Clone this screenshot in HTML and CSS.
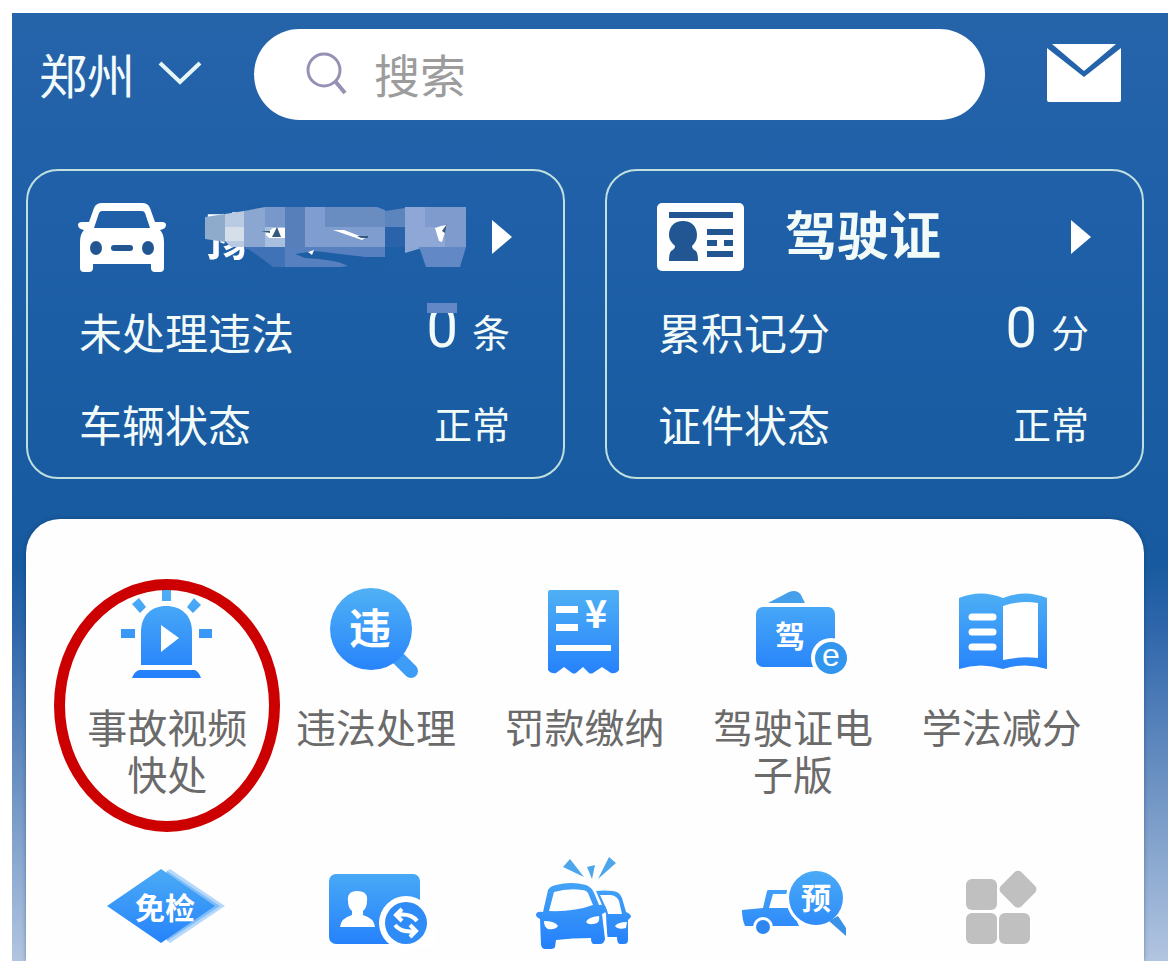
FILE: index.html
```html
<!DOCTYPE html>
<html lang="zh-CN">
<head>
    <meta charset="UTF-8">
    <meta name="viewport" content="width=device-width, initial-scale=1.0">
    <title>交管12123 - 郑州</title>
    <link rel="stylesheet" href="styles.css">
</head>
<body>
    <div class="app">
        <!-- 顶部栏 -->
        <header class="topbar">
            <button class="city" type="button">
                郑州
                <svg width="42" height="24" viewBox="0 0 42 24" fill="none" stroke="#e6f5f5" stroke-width="4">
                    <path d="M1 2 L21 21 L41 2"/>
                </svg>
            </button>
            <label class="search">
                <svg width="42" height="44" viewBox="0 0 42 44" fill="none" stroke="#9590b4" stroke-width="3">
                    <circle cx="18" cy="19" r="16"/>
                    <path d="M29 30 L39 42" stroke-width="4"/>
                </svg>
                <input type="text" placeholder="搜索" aria-label="搜索">
            </label>
            <button class="mail" type="button" aria-label="消息">
                <svg width="74" height="58" viewBox="0 0 74 58" fill="#fff">
                    <path d="M5 0 H69 L37 27 Z"/>
                    <path d="M0 4 L37 33 L74 4 V56 Q74 58 72 58 H2 Q0 58 0 56 Z"/>
                </svg>
            </button>
        </header>

        <!-- 车辆与驾驶证 -->
        <div class="cards">
            <section class="card">
                <a class="card-title" href="#">
                    <svg width="88" height="70" viewBox="0 0 88 70">
                        <path fill="#fff" fill-rule="evenodd" d="M24 1 H64 Q70 1 72 6 L77 20 H84 Q88 20 88 23 Q88 27 82 28 Q86 32 86 40 V66 Q86 70 82 70 H77 Q73 70 73 66 V62 H15 V66 Q15 70 11 70 H6 Q2 70 2 66 V40 Q2 32 6 28 Q0 27 0 23 Q0 20 4 20 H11 L16 6 Q18 1 24 1 Z M24 9 Q22 9 21 11 L16 26 H72 L67 11 Q66 9 64 9 Z"/>
                        <g fill="#215692">
                            <ellipse cx="18" cy="46" rx="6" ry="7"/>
                            <ellipse cx="70" cy="46" rx="6" ry="7"/>
                            <rect x="33" y="43" width="22" height="6" rx="3"/>
                        </g>
                    </svg>
                    <!-- 车牌打码 -->
                    <svg class="plate" width="261" height="64" viewBox="0 0 261 64">
                        <text x="1" y="50" class="plate-text">豫</text>
                        <path fill="#1d5ea5" d="M42 0 H60 V60 H42 Z"/>
                        <path fill="#8eabcb" d="M0 12 L20 9 V37 L0 34 Z"/>
                        <path fill="#b9cbe2" d="M20 9 L39 6 V42 H26 L20 36 Z"/>
                        <path fill="#d5dfe9" d="M20 22 H39 V36 H20 Z"/>
                        <path fill="#8ba7d1" d="M39 6 L60 2 V42 H39 Z"/>
                        <path fill="#7898cb" d="M60 2 H80 V42 H60 Z"/>
                        <path fill="#a9bfdf" d="M60 22 H80 V42 H60 Z"/>
                        <path fill="#5780bb" d="M80 2 H100 V42 H80 Z"/>
                        <path fill="#809dd1" d="M100 2 H120 V42 H100 Z"/>
                        <path fill="#6a8dc1" d="M120 2 H172 L180 5 V22 H120 Z"/>
                        <path fill="#7f9ecf" d="M120 22 H180 V42 H120 Z"/>
                        <path fill="#5c84bd" d="M180 6 L200 3 V22 H180 Z"/>
                        <path fill="#2a63aa" d="M180 22 H200 V42 H180 Z"/>
                        <path fill="#8ea7d7" d="M200 2 H220 V42 L200 48 Z"/>
                        <path fill="#7f9acd" d="M220 2 H261 V42 H220 Z"/>
                        <path fill="#8fa7d4" d="M220 22 H240 V42 H220 Z"/>
                        <path fill="#6288c6" d="M214 42 H261 L255 62 H221 Z"/>
                        <path fill="#3f72b6" d="M40 42 H80 V62 H68 L60 56 L52 50 Z"/>
                        <path fill="#5680c0" d="M80 42 H180 V52 L160 52 L118 50 L143 61 L135 62 H80 Z"/>
                        <path fill="#1d5ea5" d="M90 49 L110 46 L160 52 L180 53 V62 H150 Q128 54 100 53 Z"/>
                        <path fill="#fff" d="M60 29 L68 23 H80 V33 H64 Z M128 25 H139 L160 33 L157 35 Z M230 23 L236 21 L242 20 L237 37 L234 36 Z M103 47 L109 45 L107 50 Z"/>
                        <path fill="#345b7c" d="M56 26 L65 26 V28 Z M67 32 L72 22 L76 32 Z M152 31 H163 V33 H156 Z M237 26 L242 19 L240 28 Z"/>
                    </svg>
                    <svg class="arrow" width="20" height="34" viewBox="0 0 20 34" fill="#fff">
                        <path d="M0 0 L20 17 L0 34 Z"/>
                    </svg>
                </a>
                <dl>
                    <div class="row">
                        <dt>未处理违法</dt>
                        <dd><span class="num masked">0</span>条</dd>
                    </div>
                    <div class="row">
                        <dt>车辆状态</dt>
                        <dd>正常</dd>
                    </div>
                </dl>
            </section>

            <section class="card">
                <a class="card-title" href="#">
                    <svg width="88" height="70" viewBox="0 0 88 70">
                        <rect y="1" width="87" height="68" rx="5" fill="#fff"/>
                        <g fill="#215692">
                            <path d="M12 10 H76 V16 H12 Z M50 27 H76 V33 H50 Z M50 38 H60 V44 H50 Z M67 38 H76 V44 H67 Z M50 49 H76 V55 H50 Z"/>
                            <path d="M26 19 C35 19 40 25 40 33 C40 38 38 41 35 44 Q35 47 39 49 Q41 51 41 59 H12 Q12 51 14 49 Q18 47 18 44 C15 41 12 38 12 33 C12 25 17 19 26 19 Z"/>
                        </g>
                    </svg>
                    <h2>驾驶证</h2>
                    <svg class="arrow" width="20" height="34" viewBox="0 0 20 34" fill="#fff">
                        <path d="M0 0 L20 17 L0 34 Z"/>
                    </svg>
                </a>
                <dl>
                    <div class="row">
                        <dt>累积记分</dt>
                        <dd><span class="num">0</span>分</dd>
                    </div>
                    <div class="row">
                        <dt>证件状态</dt>
                        <dd>正常</dd>
                    </div>
                </dl>
            </section>
        </div>

        <!-- 业务入口 -->
        <nav class="panel">
            <a class="item marked" href="#">
                <svg width="120" height="100" viewBox="0 0 120 100">
                    <defs>
                        <linearGradient id="blue" gradientUnits="userSpaceOnUse" x1="0" y1="5" x2="0" y2="92">
                            <stop offset="0" stop-color="#4fb0f5"/>
                            <stop offset="1" stop-color="#2480fb"/>
                        </linearGradient>
                    </defs>
                    <g fill="url(#blue)">
                        <path d="M34 80 V47 C34 30 45 21 59 21 C74 21 85 30 85 47 V80 Z"/>
                        <path d="M25 93 Q27 87 32 85 H88 Q92 87 94 93 Z"/>
                        <path d="M55 2 H64 V16 H55 Z M14 44 H28 V53 H14 Z M92 44 H105 V53 H92 Z M32 13 L39 22 L33 28 L25 19 Z M87 13 L94 20 L86 28 L80 22 Z"/>
                    </g>
                    <path fill="#fff" d="M54 40 L72 53 L54 67 Z"/>
                </svg>
                <span>事故视频快处</span>
            </a>
            <a class="item" href="#">
                <svg width="120" height="100" viewBox="0 0 120 100">
                    <path d="M82 73 L95 86" stroke="#3c9cf6" stroke-width="14" stroke-linecap="round"/>
                    <circle cx="55" cy="44" r="41" fill="url(#blue)"/>
                    <text x="54" y="59" font-size="42">违</text>
                </svg>
                <span>违法处理</span>
            </a>
            <a class="item" href="#">
                <svg width="120" height="100" viewBox="0 0 120 100">
                    <path fill="url(#blue)" d="M26 5 H93 Q95 5 95 7 V85 Q92 89 87 88 L78 82 L69 88 Q67 89 65 88 L59 82 L52 88 Q50 89 48 88 L40 82 L32 88 Q27 89 24 85 V7 Q24 5 26 5 Z"/>
                    <path fill="#fff" d="M32 21 H54 V28 H32 Z M32 39 H54 V46 H32 Z M32 60 H87 V66 H32 Z"/>
                    <text x="72" y="43" font-size="38">¥</text>
                </svg>
                <span>罚款缴纳</span>
            </a>
            <a class="item" href="#">
                <svg width="120" height="100" viewBox="0 0 120 100">
                    <path fill="#459fea" d="M35 18 L56 7 Q64 4 68 10 L72 18 Z"/>
                    <rect x="23" y="22" width="79" height="60" rx="7" fill="url(#blue)"/>
                    <text x="57" y="62" font-size="30">驾</text>
                    <circle cx="98" cy="73" r="20" fill="#fff"/>
                    <circle cx="98" cy="73" r="16" fill="#3296ef"/>
                    <text x="98" y="81" font-size="32" class="latin">e</text>
                </svg>
                <span>驾驶证电子版</span>
            </a>
            <a class="item" href="#">
                <svg width="120" height="100" viewBox="0 0 120 100">
                    <path fill="url(#blue)" d="M17 13 Q39 4 61 13 Q83 4 105 13 V84 Q83 77 61 84 Q39 77 17 84 Z"/>
                    <path fill="#fff" d="M61 21 Q78 15 96 18 V73 Q78 71 61 75 Z"/>
                    <path d="M30 32 H51 M30 47 H51 M30 62 H51" stroke="#fff" stroke-width="7" stroke-linecap="round"/>
                </svg>
                <span>学法减分</span>
            </a>

            <a class="item" href="#" aria-label="免检">
                <svg width="120" height="100" viewBox="0 0 120 100">
                    <path fill="#b5d8fb" d="M63 14 L118 51 L63 88 L54 80 V20 Z"/>
                    <path fill="#7fbdf8" d="M60 16 L113 51 L60 86 Z"/>
                    <path fill="url(#blue)" d="M54 14 L108 51 L54 88 L0 51 Z"/>
                    <text x="58" y="64" font-size="30">免检</text>
                </svg>
            </a>
            <a class="item" href="#" aria-label="证件换领">
                <svg width="120" height="100" viewBox="0 0 120 100">
                    <rect x="13" y="19" width="91" height="70" rx="7" fill="url(#blue)"/>
                    <path fill="#fff" d="M41 36 C49 36 52 40 51 46 Q51 53 47 56 V60 Q58 63 59 72 H24 Q25 63 36 60 V56 Q32 53 32 46 C31 40 34 36 41 36 Z"/>
                    <circle cx="90" cy="68" r="27" fill="#fff"/>
                    <path fill="#fff" d="M90 68 H118 V92 H76 Z"/>
                    <circle cx="90" cy="68" r="21" fill="#2f8bf5"/>
                    <path d="M86 54 L80 60 L86 66 M81 60 Q95 58 101 66 M94 70 L100 76 L94 82 M99 76 Q85 78 79 70" fill="none" stroke="#fff" stroke-width="4"/>
                </svg>
            </a>
            <a class="item" href="#" aria-label="事故处理">
                <svg width="120" height="100" viewBox="0 0 120 100">
                    <g fill="url(#blue)">
                        <path fill-rule="evenodd" d="M72 36 Q80 35 89 36 Q96 37 98 43 L102 57 Q107 59 107 62 L104 65 V85 Q104 89 100 89 H96 Q93 89 93 82 H83 L82 59 L78 50 Z M76 40 L83 55 L84 59 H98 L95 46 Q93 41 87 40 Z"/>
                        <path fill-rule="evenodd" d="M24 35 Q26 31 32 30 Q47 26 62 30 Q68 32 71 40 L75 50 Q82 49 82 54 Q82 58 78 59 L81 84 Q80 89 76 89 H70 Q67 89 67 83 Q48 83 32 85 L31 92 Q30 94 26 94 H21 Q18 94 17 90 L16 64 Q12 62 12 60 Q12 56 19 57 Z M30 37 L25 56 Q50 57 69 50 L64 38 Q62 35 58 35 Q44 33 30 37 Z"/>
                    </g>
                    <path fill="#fff" d="M20 66 Q31 66 34 71 Q31 75 24 74 Q20 72 20 66 Z M75 61 Q64 62 62 67 Q65 71 73 68 Q76 66 75 61 Z M103 67 Q94 67 91 71 Q94 75 102 73 Z"/>
                    <path d="M80 60 L83 86" stroke="#fff" stroke-width="2"/>
                    <path fill="#4ca6ec" d="M39 12 L46 4 L60 22 Z M63 12 L71 10 L68 24 Z M85 2 L92 8 L74 24 Z"/>
                </svg>
            </a>
            <a class="item" href="#" aria-label="检验预约">
                <svg width="120" height="100" viewBox="0 0 120 100">
                    <path fill="url(#blue)" d="M9 55 L30 53 L34 36 Q34 35 36 35 H54 V39 H40 L36 53 H58 L66 71 H12 Q9 64 9 55 Z"/>
                    <circle cx="30" cy="72" r="10" fill="#fff"/>
                    <circle cx="30" cy="72" r="7" fill="#2e87f0"/>
                    <circle cx="83" cy="43" r="30" fill="#fff"/>
                    <circle cx="83" cy="43" r="27" fill="url(#blue)"/>
                    <path fill="#3a92e8" d="M96 66 L105 61 L113 73 V81 Z"/>
                    <text x="83" y="54" font-size="30">预</text>
                </svg>
            </a>
            <a class="item" href="#" aria-label="更多">
                <svg width="120" height="100" viewBox="0 0 120 100" fill="#c0c0c0">
                    <rect x="24" y="24" width="31" height="31" rx="6"/>
                    <rect x="24" y="58" width="31" height="31" rx="6"/>
                    <rect x="57" y="58" width="31" height="31" rx="6"/>
                    <rect x="61" y="20" width="29" height="29" rx="5" transform="rotate(45 76 35)"/>
                </svg>
            </a>
        </nav>
    </div>
</body>
</html>
```
FILE: styles.css
```css
*, *::before, *::after {
    box-sizing: border-box;
}
body {
    margin: 13px 7px 9px 12px;
    background: #fff;
    font-family: "Noto Sans CJK SC", "Noto Sans", sans-serif;
}
a {
    color: inherit;
    text-decoration: none;
}
button {
    padding: 0;
    border: 0;
    background: none;
    font-family: inherit;
    cursor: pointer;
}
svg {
    display: block;
    flex: none;
    overflow: visible;
}
h2, dl, dd {
    margin: 0;
}
.app {
    padding: 16px 24px 0 14px;
    background: linear-gradient(#2664aa 0%, #1f60a8 20%, #175a9f 58%, #2f66ab 65%, #6f94c4 82%, #b2c5e0 100%);
}

/* 顶部栏 */
.topbar {
    display: flex;
    align-items: center;
    height: 91px;
    padding: 0 23px 0 13px;
}
.city {
    display: flex;
    align-items: center;
    gap: 24px;
    margin-right: 53px;
    padding-bottom: 3px;
    color: #f2fbfa;
    font-size: 48px;
    line-height: 64px;
}
.search {
    display: flex;
    flex: 1;
    align-items: center;
    gap: 26px;
    min-width: 0;
    height: 91px;
    margin-right: 62px;
    padding: 0 52px 3px;
    border-radius: 46px;
    background: #fff;
}
.search input {
    flex: 1;
    min-width: 0;
    padding: 0;
    border: 0;
    outline: 0;
    background: none;
    color: #666;
    font-family: inherit;
    font-size: 46px;
    line-height: 64px;
}
.search input::placeholder {
    color: #9c9c9c;
}
.mail {
    padding-bottom: 3px;
}

/* 信息卡片 */
.cards {
    display: grid;
    grid-template-columns: 1fr 1fr;
    gap: 40px;
    margin: 49px 0 40px;
}
.card {
    padding: 30px 51px 22px 50px;
    border: 2px solid #bfe0de;
    border-radius: 32px;
    color: #f2fbf8;
}
.card-title {
    display: flex;
    align-items: center;
    height: 72px;
    margin-bottom: 26px;
}
.card-title h2 {
    margin-left: 40px;
    padding-bottom: 8px;
    font-size: 52px;
    line-height: 64px;
}
.plate {
    margin-left: 39px;
}
.plate-text {
    fill: #fff;
    font-size: 50px;
    font-weight: bold;
}
.arrow {
    margin-left: auto;
}
.row {
    display: flex;
    justify-content: space-between;
    height: 64px;
    padding: 0 2px 0 1px;
    line-height: 64px;
}
.row + .row {
    margin-top: 28px;
}
.row dt {
    font-size: 43px;
}
.row dd {
    font-size: 38px;
}
.num {
    position: relative;
    margin-right: 14px;
    font-family: Roboto, sans-serif;
    font-size: 56px;
    line-height: 1;
}
.masked::before {
    content: "";
    position: absolute;
    top: 8px;
    left: 0;
    width: 30px;
    height: 10px;
    background: #6288c6;
}

/* 业务入口 */
.panel {
    display: grid;
    grid-template-columns: repeat(5, 1fr);
    row-gap: 58px;
    padding: 66px 38px 6px 37px;
    border-radius: 34px 34px 0 0;
    background: #fefefe;
    box-shadow: 0 0 4px rgba(0, 40, 80, 0.4);
}
.item {
    position: relative;
    display: flex;
    flex-direction: column;
    align-items: center;
    gap: 18px;
    color: #6b6b6b;
    font-size: 40px;
    line-height: 47px;
    text-align: center;
}
.item span {
    max-width: 164px;
}
.item text {
    fill: #fff;
    font-weight: bold;
    text-anchor: middle;
}
.item .latin {
    font-family: "Liberation Sans", sans-serif;
    font-weight: normal;
}
.marked::after {
    content: "";
    position: absolute;
    top: -6px;
    left: 50%;
    width: 226px;
    height: 253px;
    border: 11px solid #cc0001;
    border-radius: 50%;
    transform: translateX(-50%);
}
```
